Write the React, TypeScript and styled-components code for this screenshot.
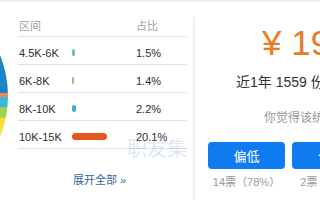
import * as React from 'react';
import styled, { createGlobalStyle } from 'styled-components';

const GlobalStyle = createGlobalStyle`
  html, body {
    margin: 0;
    padding: 0;
    background: #fff;
  }
  body {
    font-family: 'Liberation Sans', 'Noto Sans CJK SC', sans-serif;
  }
`;

interface SalaryRange {
  label: string;
  percent: number;
  color: string;
}

const ranges: SalaryRange[] = [
  { label: '4.5K-6K', percent: 1.5, color: '#74c58f' },
  { label: '6K-8K', percent: 1.4, color: '#d9a06c' },
  { label: '8K-10K', percent: 2.2, color: '#38aed8' },
  { label: '10K-15K', percent: 20.1, color: '#e5561b' },
];

const votes = [
  { label: '偏低', count: 14, percent: 78 },
  { label: '合理', count: 2, percent: 11 },
  { label: '偏高', count: 2, percent: 11 },
];

const Page = styled.div`
  position: relative;
  display: flex;
  width: 320px;
  height: 200px;
  overflow: hidden;
  border-top: 2px solid #ececec;
  box-sizing: border-box;
`;

const LeftPanel = styled.div`
  display: flex;
  width: 193px;
  flex-shrink: 0;
`;

const PieBox = styled.svg`
  display: block;
  width: 18px;
  height: 198px;
  flex-shrink: 0;
`;

const Table = styled.div`
  display: flex;
  flex-direction: column;
  width: 169px;
`;

const Row = styled.div<{ $header?: boolean }>`
  display: grid;
  grid-template-columns: 54px 63px 1fr;
  align-items: center;
  height: ${(p) => (p.$header ? '35px' : '28px')};
  padding: ${(p) => (p.$header ? '14px 0 0' : '4px 0 0')};
  box-sizing: border-box;
  border-bottom: 1px solid #e2e2e2;
  font-size: 11px;
  line-height: 16px;
  color: ${(p) => (p.$header ? '#a0a0a0' : '#2e2e2e')};
  white-space: nowrap;
`;

const Cell = styled.span`
  padding-left: 1px;
`;

const Bar = styled.span`
  display: block;
  height: 7px;
  border-radius: 4px;
  min-width: 2px;
`;

const MoreLink = styled.a`
  display: block;
  padding: 23px 0 0 55px;
  font-size: 11px;
  line-height: 16px;
  color: #336a9e;
  text-decoration: none;
  white-space: nowrap;
`;

const Watermark = styled.span`
  position: absolute;
  left: 127px;
  top: 135px;
  font-size: 20px;
  line-height: 24px;
  color: rgba(120, 155, 200, 0.26);
  pointer-events: none;
  white-space: nowrap;
`;

const Divider = styled.div`
  width: 2px;
  flex-shrink: 0;
  margin-top: 15px;
  background: #eeeeee;
`;

const RightPanel = styled.div`
  display: flex;
  flex-direction: column;
  padding-left: 13px;
  flex-shrink: 0;
  white-space: nowrap;
`;

const Line = styled.div<{ $indent: number; $top: number; $size: number; $height: number; $color: string }>`
  margin-left: ${(p) => p.$indent}px;
  margin-top: ${(p) => p.$top}px;
  font-size: ${(p) => p.$size}px;
  line-height: ${(p) => p.$height}px;
  color: ${(p) => p.$color};
`;

const ButtonRow = styled.div`
  display: flex;
  gap: 7px;
  margin-top: 15px;
`;

const VoteButton = styled.button`
  width: 77px;
  height: 27px;
  flex-shrink: 0;
  border: none;
  border-radius: 4px;
  background: #0f7bf0;
  color: #fff;
  font-family: inherit;
  font-size: 13px;
  padding: 0;
`;

const VoteCount = styled.span`
  width: 77px;
  flex-shrink: 0;
  text-align: center;
  font-size: 11px;
  line-height: 16px;
  color: #999;
`;

const VoteRow = styled(ButtonRow)`
  margin-top: 5px;
`;

// pie drawn from a center far off to the left, only its edge shows
const Pie = (): React.ReactElement => (
  <PieBox viewBox="0 0 18 198">
    <defs>
      <clipPath id="pie-clip">
        <circle cx={-101} cy={94} r={109} />
      </clipPath>
    </defs>
    <g clipPath="url(#pie-clip)">
      <rect x={0} y={40} width={18} height={51} fill="#1a84c7" />
      <rect x={0} y={91} width={18} height={4} fill="#ef8a4e" />
      <rect x={0} y={95} width={18} height={10} fill="#39b6e4" />
      <rect x={0} y={105} width={18} height={11} fill="#9ed34c" />
      <rect x={0} y={116} width={18} height={40} fill="#f1e23a" />
    </g>
  </PieBox>
);

const App = (): React.ReactElement => {
  return (
    <>
      <GlobalStyle />
      <Page>
        <LeftPanel>
          <Pie />
          <Table>
            <Row $header>
              <Cell>区间</Cell>
              <span />
              <Cell>占比</Cell>
            </Row>
            {ranges.map((r) => (
              <Row key={r.label}>
                <Cell>{r.label}</Cell>
                <span>
                  <Bar style={{ width: Math.round(r.percent * 1.74), background: r.color }} />
                </span>
                <Cell>{r.percent.toFixed(1)}%</Cell>
              </Row>
            ))}
            <MoreLink href="#">展开全部 »</MoreLink>
          </Table>
        </LeftPanel>
        <Divider />
        <RightPanel>
          <Line $indent={54} $top={21} $size={35} $height={40} $color="#ec7a25">
            ¥ 19,830
          </Line>
          <Line $indent={28} $top={9} $size={14} $height={20} $color="#333">
            近1年 1559 份工资样本
          </Line>
          <Line $indent={56} $top={17} $size={12} $height={18} $color="#999">
            你觉得该统计结果
          </Line>
          <ButtonRow>
            {votes.map((v) => (
              <VoteButton key={v.label}>{v.label}</VoteButton>
            ))}
          </ButtonRow>
          <VoteRow>
            {votes.map((v) => (
              <VoteCount key={v.label}>
                {v.count}票（{v.percent}%）
              </VoteCount>
            ))}
          </VoteRow>
        </RightPanel>
        <Watermark>职友集</Watermark>
      </Page>
    </>
  );
};

export default App;
